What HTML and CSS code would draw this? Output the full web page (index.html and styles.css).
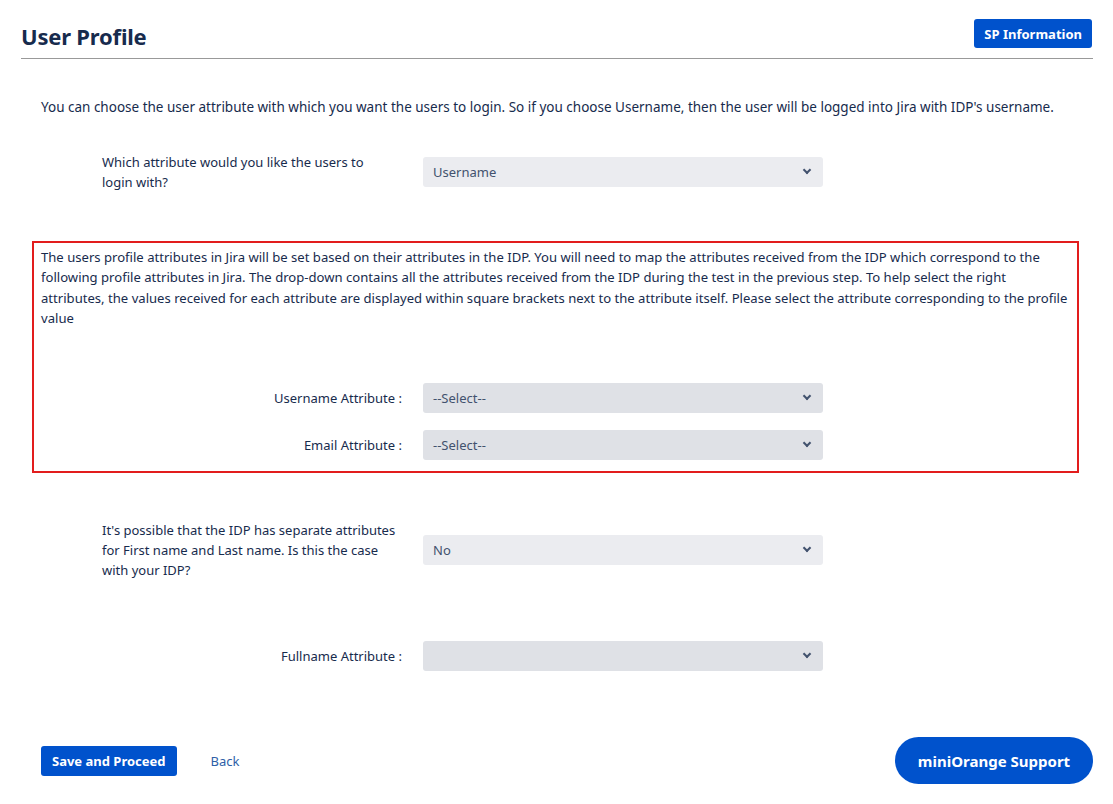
FILE: index.html
```html
<!DOCTYPE html>
<html>
<head>
<meta charset="utf-8">
<link rel="stylesheet" href="styles.css">
</head>
<body>
<div class="page">
  <header class="header">
    <h1 class="title">User Profile</h1>
    <button class="btn btn-primary btn-sp">SP Information</button>
  </header>

  <p class="intro">You can choose the user attribute with which you want the users to login. So if you choose Username, then the user will be logged into Jira with IDP's username.</p>

  <div class="row row-first">
    <label class="label label-left label-narrow">Which attribute would you like the users to login with?</label>
    <div class="select select-light"><span>Username</span><span class="chev"></span></div>
  </div>

  <section class="mapbox">
    <p class="map-text">The users profile attributes in Jira will be set based on their attributes in the IDP. You will need to map the attributes received from the IDP which correspond to the following profile attributes in Jira. The drop-down contains all the attributes received from the IDP during the test in the previous step. To help select the right attributes, the values received for each attribute are displayed within square brackets next to the attribute itself. Please select the attribute corresponding to the profile value</p>
    <div class="map-rows">
      <div class="row row-map">
        <label class="label label-right">Username Attribute :</label>
        <div class="select select-dark"><span>--Select--</span><span class="chev"></span></div>
      </div>
      <div class="row row-map">
        <label class="label label-right">Email Attribute :</label>
        <div class="select select-dark"><span>--Select--</span><span class="chev"></span></div>
      </div>
    </div>
  </section>

  <div class="row row-names">
    <label class="label label-left">It's possible that the IDP has separate attributes for First name and Last name. Is this the case with your IDP?</label>
    <div class="select select-light"><span>No</span><span class="chev"></span></div>
  </div>

  <div class="row row-full">
    <label class="label label-right">Fullname Attribute :</label>
    <div class="select select-dark"><span></span><span class="chev"></span></div>
  </div>

  <footer class="footer">
    <div class="actions">
      <button class="btn btn-primary btn-save">Save and Proceed</button>
      <a class="back" href="#">Back</a>
    </div>
    <button class="btn-support">miniOrange Support</button>
  </footer>
</div>
</body>
</html>
```

FILE: styles.css
```css
* { box-sizing: border-box; }
html, body { margin: 0; padding: 0; background: #fff; }
body {
  font-family: "Noto Sans", "Open Sans", "DejaVu Sans", sans-serif;
  color: #172b4d;
  font-size: 13.5px;
}
.page {
  width: 1113px;
  padding: 0 20px 0 21px;
}
.header {
  display: flex;
  justify-content: space-between;
  align-items: flex-start;
  border-bottom: 1px solid #999;
  height: 59px;
  padding-top: 19px;
}
.title {
  margin: 0;
  font-size: 22px;
  font-weight: 700;
  line-height: 32px;
  margin-top: 1px;
  color: #172b4d;
  letter-spacing: -0.2px;
}
.btn {
  font-family: inherit;
  border: none;
  cursor: pointer;
}
.btn-primary {
  background: #0052cc;
  color: #fff;
  font-weight: 700;
  font-size: 13px;
  border-radius: 3px;
}
.btn-sp {
  height: 29px;
  padding: 0 10px;
  margin-right: 1px;
}
.intro {
  margin: 38px 0 0 20px;
  line-height: 20px;
  color: #172b4d;
}
.row {
  display: grid;
  grid-template-columns: 300px 400px;
  column-gap: 21px;
  align-items: center;
}
.label {
  line-height: 20px;
  font-size: 13px;
  color: #172b4d;
}
.label-left { padding-right: 4px; }
.label-narrow { padding-right: 20px; }
.label-right { text-align: right; }
.row-first { margin: 35px 0 0 81px; }
.select {
  height: 30px;
  border-radius: 3px;
  display: flex;
  align-items: center;
  justify-content: space-between;
  padding: 0 10px;
  color: #42526e;
  font-size: 13px;
}
.select-light { background: #ebecf0; }
.select-dark { background: #dfe1e6; }
.chev {
  width: 6px;
  height: 6px;
  border-right: 2px solid #42526e;
  border-bottom: 2px solid #42526e;
  transform: rotate(45deg);
  margin: -4px 3px 0 0;
}
.mapbox {
  margin: 49px 14px 0 11px;
  border: 2px solid #e21d1d;
  padding: 4px 8px 11px 7px;
}
.map-text {
  margin: 0;
  line-height: 20.3px;
  font-size: 13.1px;
}
.map-rows {
  margin-top: 55px;
  display: flex;
  flex-direction: column;
  gap: 17px;
  margin-left: 61px;
}
.row-names { margin: 47px 0 0 81px; }
.row-full { margin: 61px 0 0 81px; }
.footer {
  display: flex;
  justify-content: space-between;
  align-items: center;
  margin-top: 66px;
}
.actions {
  display: flex;
  align-items: center;
  margin-left: 20px;
}
.btn-save {
  height: 30px;
  padding: 0 11px;
}
.back {
  margin-left: 34px;
  color: #2f5fa7;
  text-decoration: none;
  font-size: 13px;
}
.btn-support {
  font-family: inherit;
  border: none;
  background: #0052cc;
  color: #fff;
  font-weight: 700;
  font-size: 15px;
  height: 47px;
  width: 198px;
  border-radius: 24px;
}
```
